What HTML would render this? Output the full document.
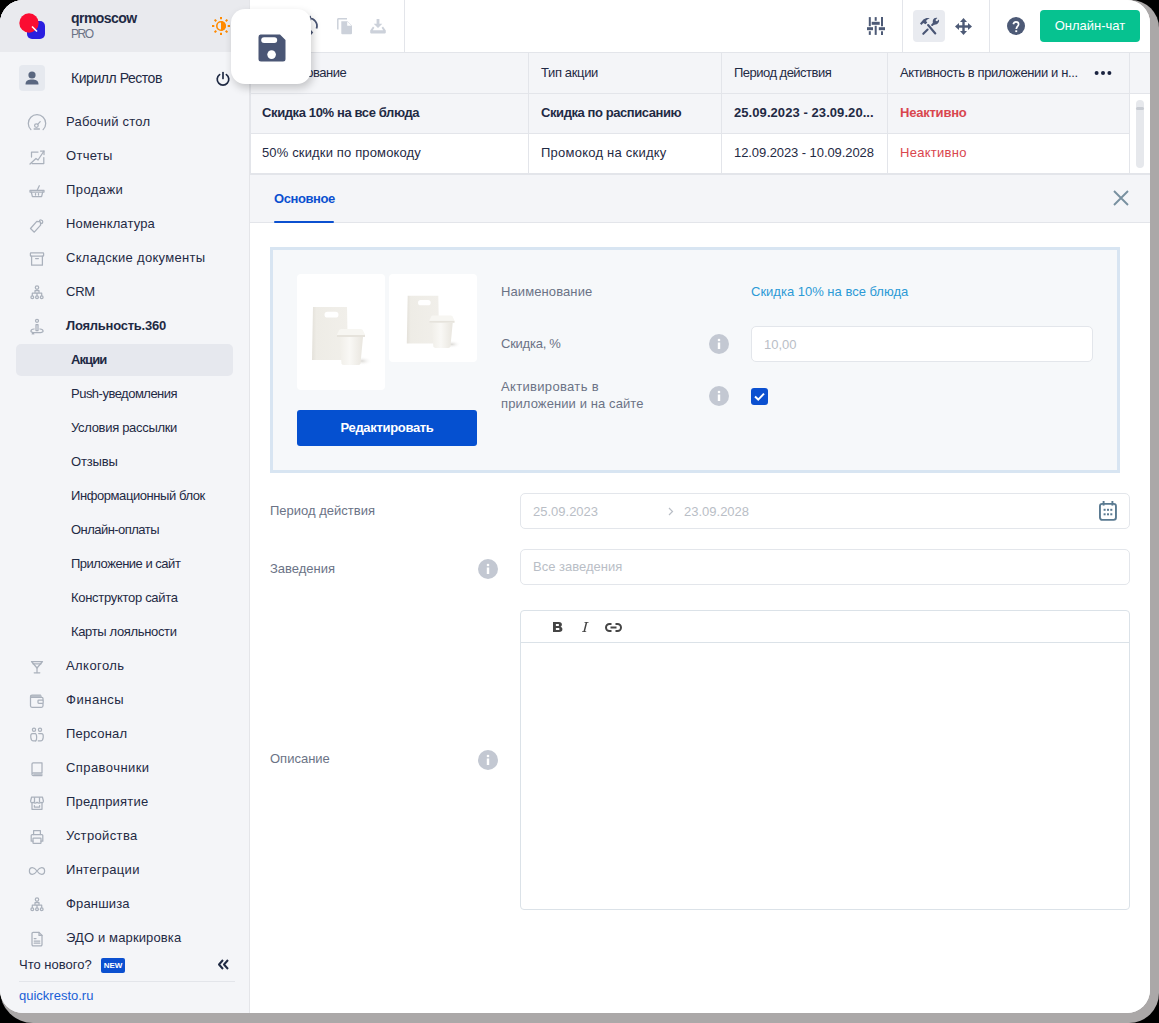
<!DOCTYPE html>
<html><head><meta charset="utf-8">
<style>
*{box-sizing:border-box;margin:0;padding:0}
html,body{width:1159px;height:1023px;overflow:hidden;background:#000}
body{font-family:"Liberation Sans",sans-serif;color:#1f2a44;position:relative}
#shadow{position:absolute;left:0;top:0;width:1159px;height:1023px;border-radius:28px 28px 30px 33px;background:#aba8a8}
#win{position:absolute;left:0;top:0;width:1150px;height:1013px;border-radius:23px;background:#fff;overflow:hidden}
#side{position:absolute;left:0;top:0;width:250px;height:1013px;background:#f4f5f8;border-right:1px solid #e4e5e9}
#sidehead{position:absolute;left:0;top:0;width:249px;height:52px;background:#e9eaee}
.mi,.si,.t{position:absolute;white-space:nowrap;line-height:16px;font-size:13px;margin-top:1px}
.mi{left:66px}
.si{left:71px}
.ic{position:absolute;left:27px;width:20px;height:20px;fill:none;stroke:#aab1bc;stroke-width:1.25;stroke-linecap:round;stroke-linejoin:round}
.b{font-weight:bold}
svg{position:absolute;overflow:visible}
</style></head><body>
<div id="shadow"></div>
<div id="win">
<div id="side">
  <div id="sidehead"></div>
  <!-- logo -->
  <svg style="left:19px;top:13px" width="27" height="27" viewBox="0 0 27 27">
    <rect x="8" y="8" width="18" height="18" rx="5" fill="#2b1fe0"/>
    <circle cx="10" cy="10" r="9.7" fill="#fb0d32"/>
    <line x1="13" y1="13.5" x2="18" y2="18.5" stroke="#fff" stroke-width="1.6"/>
  </svg>
  <div class="t b" style="left:71px;top:9px;font-size:14px;color:#1f2a44;letter-spacing:-0.55px">qrmoscow</div>
  <div class="t" style="left:71px;top:25px;font-size:12px;color:#6b7386;letter-spacing:-1.4px">PRO</div>
  <!-- sun -->
  <svg style="left:210px;top:15px" width="22" height="22" viewBox="0 0 22 22">
    <circle cx="11" cy="11" r="4.2" fill="none" stroke="#ff8a00" stroke-width="1.6"/>
    <path d="M11 6.2 A4.8 4.8 0 0 1 11 15.8Z" fill="#ff8a00"/>
    <g stroke="#ff8a00" stroke-width="2" stroke-linecap="butt"><line x1="11.00" y1="4.30" x2="11.00" y2="2.00"/><line x1="15.74" y1="6.26" x2="17.36" y2="4.64"/><line x1="17.70" y1="11.00" x2="20.00" y2="11.00"/><line x1="15.74" y1="15.74" x2="17.36" y2="17.36"/><line x1="11.00" y1="17.70" x2="11.00" y2="20.00"/><line x1="6.26" y1="15.74" x2="4.64" y2="17.36"/><line x1="4.30" y1="11.00" x2="2.00" y2="11.00"/><line x1="6.26" y1="6.26" x2="4.64" y2="4.64"/></g>
  </svg>
  <!-- user -->
  <div style="position:absolute;left:19px;top:65px;width:26px;height:26px;border-radius:4px;background:#e6e9ef"></div>
  <svg style="left:19px;top:65px" width="26" height="26" viewBox="0 0 26 26">
    <circle cx="13" cy="10" r="3.6" fill="#5a6780"/>
    <path d="M6.5 19.5 C6.5 15.5 9.5 14.6 13 14.6 C16.5 14.6 19.5 15.5 19.5 19.5Z" fill="#5a6780"/>
  </svg>
  <div class="t" style="left:71px;top:69px;font-size:14px;letter-spacing:-0.45px">Кирилл Рестов</div>
  <svg style="left:215px;top:71px" width="16" height="16" viewBox="0 0 16 16">
    <path d="M4.6 3.6 A5.8 5.8 0 1 0 11.4 3.6" fill="none" stroke="#1f2a44" stroke-width="1.7" stroke-linecap="round"/>
    <line x1="8" y1="1.5" x2="8" y2="7.5" stroke="#1f2a44" stroke-width="1.7" stroke-linecap="round"/>
  </svg>
  <div style="position:absolute;left:16px;top:344px;width:217px;height:32px;border-radius:5px;background:#e6e8ee"></div>
<div class="mi" style="top:113px;letter-spacing:0.22px">Рабочий стол</div>
<svg class="ic" style="top:113px" viewBox="0 0 20 20"><path d="M3.9 16.6 A8.7 8.7 0 1 1 16.1 16.6"/><circle cx="9.4" cy="12.6" r="1.8"/><line x1="10.7" y1="11.3" x2="13.2" y2="8.6"/><line x1="7.2" y1="15.9" x2="12.4" y2="15.9" stroke-width="1.5"/></svg>
<div class="mi" style="top:147px;letter-spacing:0.28px">Отчеты</div>
<svg class="ic" style="top:147px" viewBox="0 0 20 20"><path d="M3 17 L9 11.5 L11 13 L17 4"/><path d="M13.5 4 H17 V7.5"/><path d="M4.5 10 V5 H11"/><path d="M16.8 10.5 V16.6 H5"/></svg>
<div class="mi" style="top:181px;letter-spacing:0.42px">Продажи</div>
<svg class="ic" style="top:181px" viewBox="0 0 20 20"><g transform="translate(0,-1.6)"><path d="M3 11 H17 V12.6 H3Z"/><path d="M4.3 12.6 L5.4 17.3 H14.6 L15.7 12.6"/><line x1="8.5" y1="14.3" x2="8.5" y2="15.6"/><line x1="11.5" y1="14.3" x2="11.5" y2="15.6"/><line x1="10.3" y1="10.5" x2="12.3" y2="6.3"/></g></svg>
<div class="mi" style="top:215px;letter-spacing:0.14px">Номенклатура</div>
<svg class="ic" style="top:215px" viewBox="0 0 20 20"><path d="M3.5 13.5 L9.8 6.3 L13.4 6.8 L13.6 10.2 L7.3 17.2Z"/><path d="M12.2 6.5 A1.8 1.8 0 1 1 14 8.6"/></svg>
<div class="mi" style="top:249px;letter-spacing:0.31px">Складские документы</div>
<svg class="ic" style="top:249px" viewBox="0 0 20 20"><rect x="3.4" y="3.8" width="13.2" height="3.2" rx="0.6"/><path d="M4.6 7 V16.2 H15.4 V7"/><line x1="8.6" y1="9.5" x2="11.4" y2="9.5"/></svg>
<div class="mi" style="top:283px;letter-spacing:-0.25px">CRM</div>
<svg class="ic" style="top:283px" viewBox="0 0 20 20"><circle cx="10" cy="4.6" r="1.7"/><path d="M8 9.6 V7.6 H12 V9.6"/><path d="M5.3 12.5 V10.2 H14.7 V12.5"/><line x1="10" y1="10.2" x2="10" y2="12.5"/><circle cx="5.3" cy="14.3" r="1.4"/><circle cx="10" cy="14.3" r="1.4"/><circle cx="14.7" cy="14.3" r="1.4"/></svg>
<div class="mi b" style="top:317px;letter-spacing:-0.24px">Лояльность.360</div>
<svg class="ic" style="top:317px" viewBox="0 0 20 20"><circle cx="10" cy="3.8" r="1.5"/><path d="M9 7.5 H11 V13.5 H9Z"/><path d="M7 12 C3 12.5 3 15.6 6.5 15.6 H13.5 C17 15.6 17 12.5 13 12"/><path d="M6 15.6 L5.2 17 M6 15.6 L6.8 17"/></svg>
<div class="si b" style="top:351px;letter-spacing:-0.9px">Акции</div>
<div class="si" style="top:385px;letter-spacing:-0.51px">Push-уведомления</div>
<div class="si" style="top:419px;letter-spacing:-0.31px">Условия рассылки</div>
<div class="si" style="top:453px;letter-spacing:-0.14px">Отзывы</div>
<div class="si" style="top:487px;letter-spacing:-0.42px">Информационный блок</div>
<div class="si" style="top:521px;letter-spacing:-0.54px">Онлайн-оплаты</div>
<div class="si" style="top:555px;letter-spacing:-0.49px">Приложение и сайт</div>
<div class="si" style="top:589px;letter-spacing:-0.3px">Конструктор сайта</div>
<div class="si" style="top:623px;letter-spacing:-0.35px">Карты лояльности</div>
<div class="mi" style="top:657px;letter-spacing:0.43px">Алкоголь</div>
<svg class="ic" style="top:657px" viewBox="0 0 20 20"><path d="M4.5 4.5 H15.5 L10 11Z"/><line x1="10" y1="11" x2="10" y2="15.5"/><line x1="7.2" y1="15.8" x2="12.8" y2="15.8"/><line x1="6" y1="6.8" x2="14" y2="6.8"/></svg>
<div class="mi" style="top:691px;letter-spacing:0.52px">Финансы</div>
<svg class="ic" style="top:691px" viewBox="0 0 20 20"><path d="M13.5 4.2 H5 A1.5 1.5 0 0 0 3.5 5.7 V14.8 A1.5 1.5 0 0 0 5 16.3 H14.5 A1.5 1.5 0 0 0 16 14.8 V12.5"/><path d="M3.7 5.2 H14.2"/><rect x="11" y="9" width="5.2" height="3.4" rx="0.8"/><path d="M16 9 V7.5 A1.2 1.2 0 0 0 14.8 6.3 H4"/></svg>
<div class="mi" style="top:725px;letter-spacing:0.19px">Персонал</div>
<svg class="ic" style="top:725px" viewBox="0 0 20 20"><circle cx="7" cy="4.8" r="1.6"/><circle cx="13" cy="4.8" r="1.6"/><path d="M8.3 8.5 H5.6 C4 8.5 3.6 10 3.8 12.5 C4 14.8 5 15.8 6.5 15.8 H8.8"/><path d="M11.7 8.5 H14.4 C16 8.5 16.4 10 16.2 12.5 C16 14.8 15 15.8 13.5 15.8 H11.2"/><path d="M8.3 8.5 C10 9 10 15 8.8 15.8"/></svg>
<div class="mi" style="top:759px;letter-spacing:0.43px">Справочники</div>
<svg class="ic" style="top:759px" viewBox="0 0 20 20"><path d="M5 15.5 V5 A1.2 1.2 0 0 1 6.2 3.8 H15 V13.8 H6.5 A1.5 1.5 0 0 0 5 15.5 A1.2 1.2 0 0 0 6.2 16.6 H15"/><line x1="6.8" y1="15.2" x2="15" y2="15.2"/></svg>
<div class="mi" style="top:793px;letter-spacing:0.2px">Предприятие</div>
<svg class="ic" style="top:793px" viewBox="0 0 20 20"><path d="M4.6 4 H15.4 L16.4 8 C16.4 9.6 15 10.2 13.9 9.3 C13 10.3 11.3 10.3 10.1 9.3 C9 10.3 7.3 10.3 6.2 9.3 C5 10.2 3.6 9.6 3.6 8Z"/><path d="M5 10 V16.3 H15 V10"/><path d="M7.4 12.5 V14 H12.6 V12.5"/><line x1="7.5" y1="4.5" x2="7.5" y2="9"/><line x1="12.5" y1="4.5" x2="12.5" y2="9"/></svg>
<div class="mi" style="top:827px;letter-spacing:0.36px">Устройства</div>
<svg class="ic" style="top:827px" viewBox="0 0 20 20"><path d="M6.6 7.6 V3.6 H13.4 V7.6"/><path d="M6 14.2 H4.2 V8.6 A1 1 0 0 1 5.2 7.6 H14.8 A1 1 0 0 1 15.8 8.6 V14.2 H14"/><rect x="6" y="11" width="8" height="5.4" rx="0.6"/></svg>
<div class="mi" style="top:861px;letter-spacing:0.3px">Интеграции</div>
<svg class="ic" style="top:861px" viewBox="0 0 20 20"><path d="M10 10 C8.2 7.4 6.8 6.6 5.4 6.6 C3.6 6.6 2.4 8.1 2.4 10 C2.4 11.9 3.6 13.4 5.4 13.4 C6.8 13.4 8.2 12.6 10 10 C11.8 7.4 13.2 6.6 14.6 6.6 C16.4 6.6 17.6 8.1 17.6 10 C17.6 11.9 16.4 13.4 14.6 13.4 C13.2 13.4 11.8 12.6 10 10Z"/></svg>
<div class="mi" style="top:895px;letter-spacing:0.17px">Франшиза</div>
<svg class="ic" style="top:895px" viewBox="0 0 20 20"><circle cx="10" cy="4.6" r="1.7"/><path d="M8 9.6 V7.6 H12 V9.6"/><path d="M5.3 12.5 V10.2 H14.7 V12.5"/><line x1="10" y1="10.2" x2="10" y2="12.5"/><circle cx="5.3" cy="14.3" r="1.4"/><circle cx="10" cy="14.3" r="1.4"/><circle cx="14.7" cy="14.3" r="1.4"/></svg>
<div class="mi" style="top:929px;letter-spacing:0.13px">ЭДО и маркировка</div>
<svg class="ic" style="top:929px" viewBox="0 0 20 20"><path d="M12 3.4 H6.2 A1.2 1.2 0 0 0 5 4.6 V15.6 A1.2 1.2 0 0 0 6.2 16.8 H13.8 A1.2 1.2 0 0 0 15 15.6 V6.4Z"/><path d="M12 3.4 V6.4 H15"/><line x1="7.2" y1="9.6" x2="9" y2="9.6"/><line x1="7.2" y1="12" x2="12.8" y2="12"/><line x1="7.2" y1="14.2" x2="12.8" y2="14.2"/></svg>
<div class="t" style="left:19px;top:956px">Что нового?</div>
<div style="position:absolute;left:101px;top:958px;width:24px;height:15px;border-radius:2px;background:#0b50d0;color:#fff;font-size:8px;font-weight:bold;line-height:15px;text-align:center">NEW</div>
<svg style="left:217px;top:958px" width="13" height="13" viewBox="0 0 13 13"><path d="M6 2 L2 6.5 L6 11 M11 2 L7 6.5 L11 11" fill="none" stroke="#1f2a44" stroke-width="2" stroke-linejoin="round"/></svg>
<div style="position:absolute;left:19px;top:981px;width:216px;height:1px;background:#e3e5ea"></div>
<div class="t" style="left:19px;top:987px;color:#1a5fd6">quickresto.ru</div>
</div>
<div id="main" style="position:absolute;left:250px;top:0;width:900px;height:1013px;background:#fff">
</div>
<!-- toolbar -->
<div style="position:absolute;left:250px;top:52px;width:900px;height:1px;background:#e3e5ea"></div>
<div style="position:absolute;left:404px;top:0;width:1px;height:52px;background:#e3e5ea"></div>
<div style="position:absolute;left:902px;top:0;width:1px;height:52px;background:#e3e5ea"></div>
<div style="position:absolute;left:989px;top:0;width:1px;height:52px;background:#e3e5ea"></div>
<!-- refresh icon (partially hidden) -->
<svg style="left:298px;top:14px" width="24" height="24" viewBox="0 0 24 24">
  <path d="M10.5 4.5 A7.5 7.5 0 0 1 18.5 14.5" fill="none" stroke="#4a5675" stroke-width="1.8"/>
  <path d="M10 4 L13 1.5 L13 7Z" fill="#4a5675"/>
  <path d="M13 16 L15.2 18.5 L13 21Z" fill="#4a5675"/>
</svg>
<!-- copy icon -->
<svg style="left:337px;top:18px" width="16" height="17" viewBox="0 0 16 17">
  <path d="M0.8 11.5 V1.2 A0.4 0.4 0 0 1 1.2 0.8 H10" stroke="#ccd1da" stroke-width="1.5" fill="none"/>
  <path d="M4.3 3.2 H10.5 L15 7.7 V15.2 A1 1 0 0 1 14 16.2 H5.3 A1 1 0 0 1 4.3 15.2Z" fill="#ccd1da"/>
  <path d="M10.2 3.5 V7.8 H14.6Z" fill="#fff"/>
</svg>
<!-- download icon -->
<svg style="left:370px;top:19px" width="16" height="15" viewBox="0 0 16 15">
  <path d="M6.6 0 H9.4 V4.8 H12.3 L8 9.1 L3.7 4.8 H6.6Z" fill="#ccd1da"/>
  <path d="M3 7.6 L0.2 11.4 V13.6 A0.8 0.8 0 0 0 1 14.4 H15 A0.8 0.8 0 0 0 15.8 13.6 V11.4 L13 7.6 L11.6 8.8 L13.2 11.2 H2.8 L4.4 8.8Z" fill="#ccd1da"/>
</svg>
<!-- sliders icon -->
<svg style="left:866px;top:16px" width="20" height="20" viewBox="0 0 20 20">
  <g stroke="#4d5a76" stroke-width="2" fill="none">
    <line x1="3.8" y1="1.1" x2="3.8" y2="10.2"/><line x1="3.8" y1="15.2" x2="3.8" y2="18.9"/>
    <line x1="9.7" y1="1.1" x2="9.7" y2="4.8"/><line x1="9.7" y1="9.8" x2="9.7" y2="18.9"/>
    <line x1="16" y1="1.1" x2="16" y2="10.2"/><line x1="16" y1="15.2" x2="16" y2="18.9"/>
  </g>
  <g fill="#4d5a76">
    <rect x="1" y="11.2" width="6" height="3"/><rect x="5.7" y="5.8" width="8" height="3"/><rect x="12.8" y="11.2" width="6.2" height="3"/>
  </g>
</svg>
<!-- tools button -->
<div style="position:absolute;left:913px;top:10px;width:32px;height:32px;border-radius:4px;background:#e9ebf0"></div>
<svg style="left:913px;top:10px" width="32" height="32" viewBox="0 0 32 32">
  <g fill="#4a5675">
  <line x1="15.1" y1="15" x2="22.3" y2="23.5" stroke="#4a5675" stroke-width="2.1" stroke-linecap="round"/>
  <path d="M7 13.4 L8.4 14.9 L10.3 13.1 L12.5 14.3 L14.3 12.5 L13 10.9 C14.1 9.6 15.3 8.8 16.8 8.3 C14.5 7.5 12 8.2 10.4 9.5Z"/>
  <line x1="14.6" y1="19.5" x2="10.3" y2="23.8" stroke="#4a5675" stroke-width="2.1" stroke-linecap="round"/>
  <line x1="19.2" y1="15" x2="21" y2="13.2" stroke="#4a5675" stroke-width="2.1" stroke-linecap="round"/>
  <path d="M20 13.6 L21.3 14.8 C22.8 14.9 24.6 14.2 25.5 12.6 C26.2 11.4 26.2 10.3 25.9 9.5 L24.1 11.2 L22.9 10.9 L22.6 9.7 L24.3 7.9 C23.5 7.6 22.4 7.6 21.3 8.3 C19.7 9.3 19.5 11.3 20 13.6Z"/>
  </g>
</svg>
<!-- move icon -->
<svg style="left:955px;top:18px" width="17" height="17" viewBox="0 0 17 17">
  <g fill="#4d5a76">
    <rect x="7.3" y="3" width="2.4" height="11"/><rect x="3" y="7.3" width="11" height="2.4"/>
    <path d="M8.5 0 L12 4 H5Z"/><path d="M8.5 17 L12 13 H5Z"/><path d="M0 8.5 L4 5 V12Z"/><path d="M17 8.5 L13 5 V12Z"/>
  </g>
</svg>
<!-- help -->
<svg style="left:1007px;top:17px" width="18" height="18" viewBox="0 0 18 18">
  <circle cx="9" cy="9" r="9" fill="#4d5a76"/>
  <path d="M6.3 7.3 C6.7 5.7 7.7 4.9 9 4.9 C10.5 4.9 11.6 6 11.6 7.3 C11.6 8.7 10.5 9.3 9.9 10.2 C9.5 10.8 9.3 11.3 9.3 12.1" fill="none" stroke="#fff" stroke-width="1.7"/>
  <rect x="8.3" y="13.3" width="1.9" height="1.8" fill="#fff"/>
</svg>
<div style="position:absolute;left:1040px;top:10px;width:100px;height:32px;border-radius:4px;background:#06c290;color:#fff;font-size:13px;line-height:32px;text-align:center">Онлайн-чат</div>

<!-- table header -->
<div style="position:absolute;left:250px;top:53px;width:880px;height:41px;background:#f4f5f8;border-bottom:1px solid #e3e5ea"></div>
<div style="position:absolute;left:250px;top:94px;width:880px;height:40px;background:#f4f5f8;border-bottom:1px solid #e3e5ea"></div>
<div style="position:absolute;left:250px;top:134px;width:880px;height:41px;background:#fff;border-bottom:2px solid #e3e5ea"></div>
<div style="position:absolute;left:1129px;top:53px;width:21px;height:41px;background:#f4f5f8;border-left:1px solid #e3e5ea;border-bottom:1px solid #e3e5ea"></div><div style="position:absolute;left:1129px;top:94px;width:21px;height:81px;background:#fff;border-left:1px solid #e3e5ea;border-bottom:2px solid #e3e5ea"></div>
<div style="position:absolute;left:1136px;top:100px;width:8px;height:68px;border-radius:4px;background:#e6e8ec"></div>
<div style="position:absolute;left:1136px;top:107px;width:8px;height:3px;border-radius:1.5px;background:#c8ccd3"></div>
<div style="position:absolute;left:250px;top:53px;width:1px;height:122px;background:#e3e5ea"></div>
<div style="position:absolute;left:528px;top:53px;width:1px;height:122px;background:#e3e5ea"></div>
<div style="position:absolute;left:721px;top:53px;width:1px;height:122px;background:#e3e5ea"></div>
<div style="position:absolute;left:887px;top:53px;width:1px;height:122px;background:#e3e5ea"></div>

<div class="t" style="left:262px;top:64px;letter-spacing:-0.5px">Наименование</div>
<div class="t" style="left:541px;top:64px;letter-spacing:-0.36px">Тип акции</div>
<div class="t" style="left:734px;top:64px;letter-spacing:-0.52px">Период действия</div>
<div class="t" style="left:900px;top:64px;letter-spacing:-0.37px">Активность в приложении и н...</div>
<svg style="left:1094px;top:70px" width="18" height="6" viewBox="0 0 18 6"><circle cx="2.6" cy="3" r="2" fill="#1a2340"/><circle cx="9" cy="3" r="2" fill="#1a2340"/><circle cx="15.4" cy="3" r="2" fill="#1a2340"/></svg>

<div class="t b" style="left:262px;top:104px;letter-spacing:-0.38px">Скидка 10% на все блюда</div>
<div class="t b" style="left:541px;top:104px;letter-spacing:-0.42px">Скидка по расписанию</div>
<div class="t b" style="left:734px;top:104px;letter-spacing:0.07px">25.09.2023 - 23.09.20...</div>
<div class="t b" style="left:900px;top:104px;letter-spacing:-0.22px;color:#d9464e">Неактивно</div>

<div class="t" style="left:262px;top:144px;letter-spacing:0.145px">50% скидки по промокоду</div>
<div class="t" style="left:541px;top:144px;letter-spacing:0.235px">Промокод на скидку</div>
<div class="t" style="left:734px;top:144px;letter-spacing:-0.08px">12.09.2023 - 10.09.2028</div>
<div class="t" style="left:900px;top:144px;letter-spacing:0.27px;color:#d9464e">Неактивно</div>

<!-- tabs -->
<div style="position:absolute;left:250px;top:175px;width:900px;height:48px;background:#f4f5f8;border-bottom:1px solid #e3e5ea"></div>
<div class="t b" style="left:274px;top:190px;color:#0b50d0;letter-spacing:-0.43px">Основное</div>
<div style="position:absolute;left:274px;top:221px;width:60px;height:2px;background:#0b50d0;border-radius:1px"></div>
<svg style="left:1113px;top:190px" width="16" height="16" viewBox="0 0 16 16"><path d="M1 1 L15 15 M15 1 L1 15" stroke="#7890a0" stroke-width="1.9"/></svg>

<!-- card -->
<div style="position:absolute;left:270px;top:247px;width:850px;height:226px;background:#f6f8fa;border:3px solid #d8e5f2"></div>
<div style="position:absolute;left:297px;top:274px;width:88px;height:116px;background:#fff;border-radius:4px"></div>
<div style="position:absolute;left:389px;top:274px;width:88px;height:88px;background:#fff;border-radius:4px"></div>
<svg style="left:310px;top:304px" width="60.0" height="64.0" viewBox="0 0 60 64">
  <defs>
   <linearGradient id="bgp1" x1="0" x2="1" y1="0" y2="0"><stop offset="0" stop-color="#e4e1da"/><stop offset="0.12" stop-color="#eeece6"/><stop offset="1" stop-color="#f1efea"/></linearGradient>
   <linearGradient id="cgp1" x1="0" x2="1"><stop offset="0" stop-color="#f0eee8"/><stop offset="0.45" stop-color="#f9f8f5"/><stop offset="1" stop-color="#e9e6df"/></linearGradient>
   <radialGradient id="shp1" cx="0.5" cy="0.5" r="0.5"><stop offset="0" stop-color="#bdbab3" stop-opacity="0.55"/><stop offset="1" stop-color="#fff" stop-opacity="0"/></radialGradient>
  </defs>
  <ellipse cx="52" cy="57" rx="10" ry="4.5" fill="url(#shp1)"/>
  <path d="M3 3 H37 L38 56 H2Z" fill="url(#bgp1)"/>
  <rect x="14.5" y="7.8" width="14" height="5.8" rx="2.9" fill="#fff"/>
  <path d="M29 33 H53 L50.5 59.5 Q50 61 48 61 H34 Q32 61 31.5 59.5Z" fill="url(#cgp1)"/>
  <path d="M28.5 27.5 Q29 25 31 25 H51 Q53 25 53.5 27.5 L55 30.5 V33 H27 V30.5Z" fill="#f7f6f2"/>
  <rect x="27" y="31" width="28" height="2" fill="#e6e3dc"/>
</svg>
<svg style="left:405px;top:292.7px" width="54.0" height="57.6" viewBox="0 0 60 64">
  <defs>
   <linearGradient id="bgp2" x1="0" x2="1" y1="0" y2="0"><stop offset="0" stop-color="#e4e1da"/><stop offset="0.12" stop-color="#eeece6"/><stop offset="1" stop-color="#f1efea"/></linearGradient>
   <linearGradient id="cgp2" x1="0" x2="1"><stop offset="0" stop-color="#f0eee8"/><stop offset="0.45" stop-color="#f9f8f5"/><stop offset="1" stop-color="#e9e6df"/></linearGradient>
   <radialGradient id="shp2" cx="0.5" cy="0.5" r="0.5"><stop offset="0" stop-color="#bdbab3" stop-opacity="0.55"/><stop offset="1" stop-color="#fff" stop-opacity="0"/></radialGradient>
  </defs>
  <ellipse cx="52" cy="57" rx="10" ry="4.5" fill="url(#shp2)"/>
  <path d="M3 3 H37 L38 56 H2Z" fill="url(#bgp2)"/>
  <rect x="14.5" y="7.8" width="14" height="5.8" rx="2.9" fill="#fff"/>
  <path d="M29 33 H53 L50.5 59.5 Q50 61 48 61 H34 Q32 61 31.5 59.5Z" fill="url(#cgp2)"/>
  <path d="M28.5 27.5 Q29 25 31 25 H51 Q53 25 53.5 27.5 L55 30.5 V33 H27 V30.5Z" fill="#f7f6f2"/>
  <rect x="27" y="31" width="28" height="2" fill="#e6e3dc"/>
</svg>
<div style="position:absolute;left:297px;top:410px;width:180px;height:36px;background:#0550d0;border-radius:3px;color:#fff;font-size:13px;font-weight:bold;line-height:36px;text-align:center;letter-spacing:-0.32px">Редактировать</div>

<div class="t" style="left:501px;top:283px;letter-spacing:0.1px;color:#6b7386">Наименование</div>
<div class="t" style="left:751px;top:283px;color:#2c9ad6">Скидка 10% на все блюда</div>
<div class="t" style="left:501px;top:335px;letter-spacing:-0.25px;color:#6b7386">Скидка, %</div>
<div class="t" style="left:501px;top:378px;letter-spacing:0.33px;color:#6b7386">Активировать в</div>
<div class="t" style="left:501px;top:395px;letter-spacing:0.1px;color:#6b7386">приложении и на сайте</div>
<svg style="left:709px;top:334px" width="20" height="20" viewBox="0 0 20 20"><circle cx="10" cy="10" r="10" fill="#c3c8d2"/><rect x="8.8" y="8.5" width="2.4" height="6.5" fill="#fff"/><circle cx="10" cy="6" r="1.3" fill="#fff"/></svg>
<svg style="left:709px;top:386px" width="20" height="20" viewBox="0 0 20 20"><circle cx="10" cy="10" r="10" fill="#c3c8d2"/><rect x="8.8" y="8.5" width="2.4" height="6.5" fill="#fff"/><circle cx="10" cy="6" r="1.3" fill="#fff"/></svg>
<div style="position:absolute;left:751px;top:326px;width:342px;height:36px;background:#fff;border:1px solid #e3e6eb;border-radius:5px"></div>
<div class="t" style="left:764px;top:336px;color:#b9bec6">10,00</div>
<div style="position:absolute;left:751px;top:388px;width:17px;height:17px;background:#0b50d0;border-radius:3px"></div>
<svg style="left:751px;top:388px" width="17" height="17" viewBox="0 0 17 17"><path d="M4 8.6 L7.2 11.6 L13 5.6" fill="none" stroke="#fff" stroke-width="2"/></svg>

<!-- form -->
<div class="t" style="left:270px;top:502px;color:#6b7386">Период действия</div>
<div style="position:absolute;left:520px;top:493px;width:610px;height:36px;background:#fff;border:1px solid #e3e6eb;border-radius:5px"></div>
<div class="t" style="left:533px;top:503px;color:#b9bec6">25.09.2023</div>
<svg style="left:668px;top:507px" width="6" height="9" viewBox="0 0 6 9"><path d="M1 1 L4.5 4.5 L1 8" fill="none" stroke="#b9bec6" stroke-width="1.2"/></svg>
<div class="t" style="left:684px;top:503px;color:#b9bec6">23.09.2028</div>
<svg style="left:1098px;top:500px" width="20" height="22" viewBox="0 0 20 22">
  <rect x="1.95" y="3.9" width="16" height="16" rx="2.3" fill="none" stroke="#5a7a91" stroke-width="1.9"/>
  <line x1="5.6" y1="1" x2="5.6" y2="5.6" stroke="#5a7a91" stroke-width="1.9"/><line x1="14.4" y1="1" x2="14.4" y2="5.6" stroke="#5a7a91" stroke-width="1.9"/>
  <g fill="#5a7a91"><rect x="5.6" y="8.8" width="2" height="2"/><rect x="9" y="8.8" width="2" height="2"/><rect x="12.3" y="8.8" width="2" height="2"/><rect x="5.6" y="13.3" width="2" height="2"/><rect x="9" y="13.3" width="2" height="2"/><rect x="12.3" y="13.3" width="2" height="2"/></g>
</svg>

<div class="t" style="left:270px;top:560px;color:#6b7386">Заведения</div>
<svg style="left:478px;top:559px" width="20" height="20" viewBox="0 0 20 20"><circle cx="10" cy="10" r="10" fill="#c3c8d2"/><rect x="8.8" y="8.5" width="2.4" height="6.5" fill="#fff"/><circle cx="10" cy="6" r="1.3" fill="#fff"/></svg>
<div style="position:absolute;left:520px;top:549px;width:610px;height:36px;background:#fff;border:1px solid #e3e6eb;border-radius:5px"></div>
<div class="t" style="left:533px;top:558px;color:#b9bec6">Все заведения</div>

<div style="position:absolute;left:520px;top:610px;width:610px;height:300px;background:#fff;border:1px solid #dbe2e8;border-radius:4px"></div>
<div style="position:absolute;left:521px;top:642px;width:608px;height:1px;background:#dbe2e8"></div>
<svg style="left:552.8px;top:622px" width="9.4" height="10" viewBox="0 0 9.4 10"><path fill="#454545" fill-rule="evenodd" d="M0 0 H5.8 C8 0 8.9 1.1 8.9 2.5 C8.9 3.6 8.3 4.4 7.4 4.8 C8.7 5.1 9.4 6 9.4 7.3 C9.4 9 8.3 10 6.1 10 H0Z M2.9 1.9 H5.2 C5.8 1.9 6.1 2.3 6.1 2.9 C6.1 3.5 5.8 3.9 5.2 3.9 H2.9Z M2.9 5.9 H5.5 C6.2 5.9 6.5 6.3 6.5 7 C6.5 7.7 6.2 8.1 5.5 8.1 H2.9Z"/></svg>
<svg style="left:581.8px;top:622px" width="6.6" height="10" viewBox="0 0 6.6 10"><path fill="#454545" d="M2.6 0 H6.6 L6.45 0.8 H5.2 L3.05 9.2 H4.3 L4.1 10 H0 L0.2 9.2 H1.5 L3.65 0.8 H2.4Z"/></svg>
<svg style="left:604.5px;top:622.5px" width="17" height="9" viewBox="0 0 17 9"><g fill="none" stroke="#454545" stroke-width="2"><path d="M6.5 1 H4.5 A3.5 3.5 0 0 0 4.5 8 H6.5"/><path d="M10.5 1 H12.5 A3.5 3.5 0 0 1 12.5 8 H10.5"/><path d="M5.5 4.5 H11.5"/></g></svg>

<div class="t" style="left:270px;top:750px;color:#6b7386">Описание</div>
<svg style="left:478px;top:750px" width="20" height="20" viewBox="0 0 20 20"><circle cx="10" cy="10" r="10" fill="#c3c8d2"/><rect x="8.8" y="8.5" width="2.4" height="6.5" fill="#fff"/><circle cx="10" cy="6" r="1.3" fill="#fff"/></svg>

<!-- floating save button -->
<div style="position:absolute;left:231px;top:9px;width:80px;height:75px;border-radius:14px;background:#fff;box-shadow:2px 4px 8px rgba(0,0,0,0.2)"></div>
<svg style="left:258px;top:34px" width="28" height="28" viewBox="0 0 28 28">
  <path d="M2.5 0.5 H22 L27.5 6 V25 A2.5 2.5 0 0 1 25 27.5 H3 A2.5 2.5 0 0 1 0.5 25 V3 A2.5 2.5 0 0 1 2.5 0.5Z" fill="#4a5675"/>
  <rect x="3.2" y="3.2" width="16" height="5.8" rx="2.9" fill="#fff"/>
  <circle cx="13.6" cy="20.6" r="4.3" fill="#fff"/>
</svg>

</div>
</body></html>
